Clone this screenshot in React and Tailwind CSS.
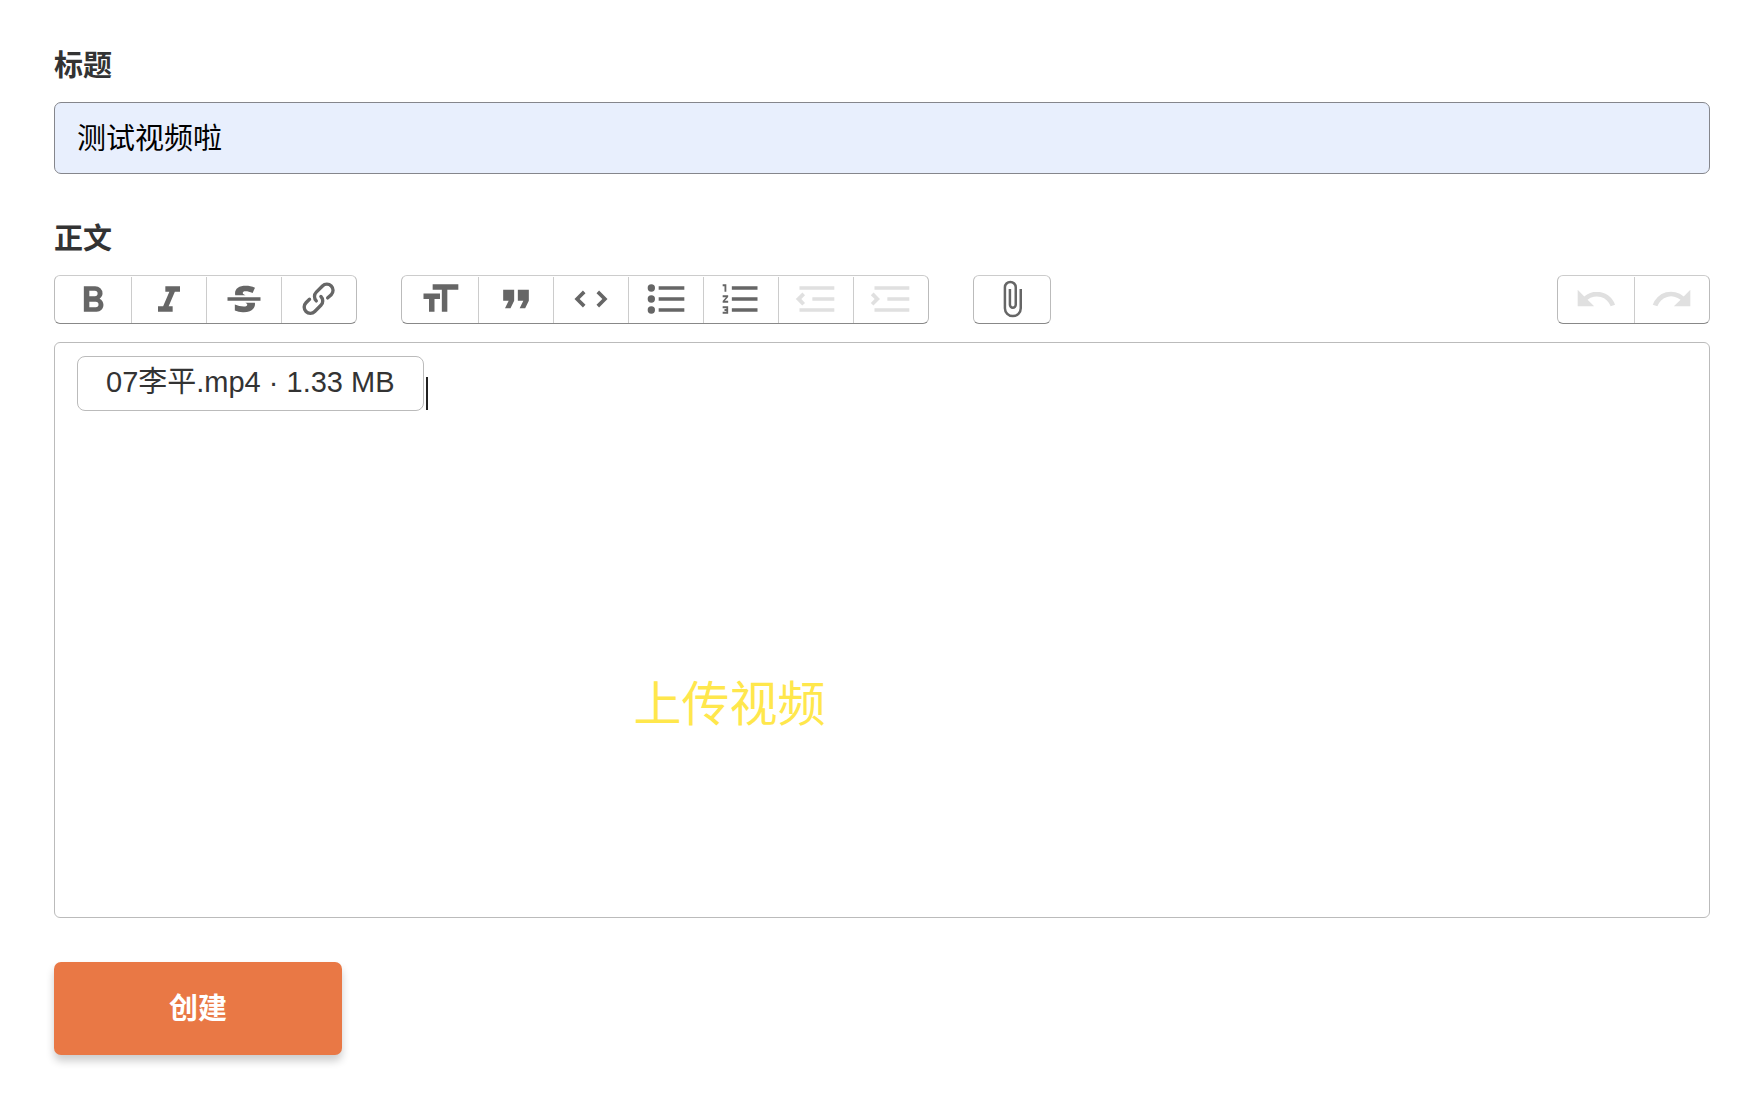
import clsx from "clsx";

const textTools = [
  {
    label: "粗体",
    d: "M15.6 11.8c1-.7 1.6-1.8 1.6-2.8a4 4 0 0 0-4-4H7v14h7c2.1 0 3.7-1.7 3.7-3.8 0-1.5-.8-2.8-2.1-3.4zM10 7.5h3a1.5 1.5 0 1 1 0 3h-3v-3zm3.5 9H10v-3h3.5a1.5 1.5 0 1 1 0 3z",
  },
  { label: "斜体", d: "M10 5v3h2.2l-3.4 8H6v3h8v-3h-2.2l3.4-8H18V5h-8z" },
  {
    label: "删除线",
    d: "M12.73 14l.28.14c.26.15.45.3.57.44.12.14.18.3.18.5 0 .3-.15.56-.44.75-.3.2-.76.3-1.39.3A13.52 13.52 0 0 1 7 14.95v3.37a10.64 10.64 0 0 0 4.84.88c1.26 0 2.35-.19 3.28-.56.93-.37 1.64-.9 2.14-1.57s.74-1.45.74-2.32c0-.26-.02-.51-.06-.75h-5.21zm-5.5-4c-.08-.34-.12-.7-.12-1.1 0-1.29.52-2.3 1.58-3.02 1.05-.72 2.5-1.08 4.34-1.08 1.62 0 3.28.34 4.97 1l-1.3 2.93c-1.47-.6-2.73-.9-3.8-.9-.55 0-.96.08-1.2.26-.26.17-.38.38-.38.64 0 .27.16.52.48.74.17.12.53.3 1.05.53H7.23zM3 13h18v-2H3v2z",
  },
  {
    label: "链接",
    d: "M9.88 13.7a4.3 4.3 0 0 1 0-6.07l3.37-3.37a4.26 4.26 0 0 1 6.07 0 4.3 4.3 0 0 1 0 6.06l-1.96 1.72a.91.91 0 1 1-1.3-1.3l1.97-1.71a2.46 2.46 0 0 0-3.48-3.48l-3.38 3.37a2.46 2.46 0 0 0 0 3.48.91.91 0 1 1-1.3 1.3zM4.25 19.46a4.3 4.3 0 0 1 0-6.07l1.93-1.9a.91.91 0 1 1 1.3 1.3l-1.93 1.9a2.46 2.46 0 0 0 3.48 3.48l3.37-3.38c.96-.96.96-2.52 0-3.48a.91.91 0 1 1 1.3-1.3 4.3 4.3 0 0 1 0 6.07l-3.38 3.38a4.26 4.26 0 0 1-6.07 0z",
  },
];

const blockTools = [
  { label: "标题", d: "M12 9v3H9v7H6v-7H3V9h9zM8 4h14v3h-6v12h-3V7H8V4z" },
  { label: "引用", d: "M6 17h3l2-4V7H5v6h3zm8 0h3l2-4V7h-6v6h3z" },
  {
    label: "代码",
    d: "M18.2 12L15 15.2l1.4 1.4L21 12l-4.6-4.6L15 8.8l3.2 3.2zM5.8 12L9 8.8 7.6 7.4 3 12l4.6 4.6L9 15.2 5.8 12z",
  },
  {
    label: "项目列表",
    d: "M4 4a2 2 0 1 0 0 4 2 2 0 0 0 0-4zm0 6a2 2 0 1 0 0 4 2 2 0 0 0 0-4zm0 6a2 2 0 1 0 0 4 2 2 0 0 0 0-4zm4 3h14v-2H8v2zm0-6h14v-2H8v2zm0-8v2h14V5H8z",
  },
  {
    label: "编号列表",
    d: "M2 17h2v.5H3v1h1v.5H2v1h3v-4H2v1zm1-9h1V4H2v1h1v3zm-1 3h1.8L2 13.1v.9h3v-1H3.2L5 10.9V10H2v1zm5-6v2h14V5H7zm0 14h14v-2H7v2zm0-6h14v-2H7v2z",
  },
  {
    label: "减少缩进",
    disabled: true,
    d: "M3 19h19v-2H3v2zm7-6h12v-2H10v2zm-8.3-.3l2.8 2.9L6 14.2 4 12l2-2-1.4-1.5L1 12l.7.7zM3 5v2h19V5H3z",
  },
  {
    label: "增加缩进",
    disabled: true,
    d: "M3 19h19v-2H3v2zm7-6h12v-2H10v2zm-6.9-1L1 14.2l1.4 1.4L6 12l-.7-.7-2.8-2.8L1 9.9 3.1 12zM3 5v2h19V5H3z",
  },
];

const fileTools = [
  {
    label: "附件",
    small: true,
    d: "M16.5 6v11.5a4 4 0 1 1-8 0V5a2.5 2.5 0 0 1 5 0v10.5a1 1 0 1 1-2 0V6H10v9.5a2.5 2.5 0 0 0 5 0V5a4 4 0 1 0-8 0v12.5a5.5 5.5 0 0 0 11 0V6h-1.5z",
  },
];

const historyTools = [
  {
    label: "撤销",
    disabled: true,
    d: "M12.5 8c-2.6 0-5 1-6.9 2.6L2 7v9h9l-3.6-3.6A8 8 0 0 1 20 16l2.4-.8a10.5 10.5 0 0 0-10-7.2z",
  },
  {
    label: "重做",
    disabled: true,
    d: "M18.4 10.6a10.5 10.5 0 0 0-16.9 4.6L4 16a8 8 0 0 1 12.7-3.6L13 16h9V7l-3.6 3.6z",
  },
];

function ToolGroup({ tools }) {
  return (
    <div className="flex rounded-md border border-[#bbb] border-t-[#ccc] border-b-[#888] pt-px">
      {tools.map((tool) => (
        <button
          key={tool.label}
          type="button"
          aria-label={tool.label}
          disabled={tool.disabled}
          className="flex h-[46px] w-[75px] items-center justify-center border-l border-[#ccc] pb-[2px] first:w-[76px] first:border-l-0"
        >
          <svg
            viewBox="0 0 24 24"
            aria-hidden="true"
            className={clsx(tool.small ? "size-10" : "size-11", tool.disabled ? "fill-[#e0e0e0]" : "fill-[#666]")}
          >
            <path d={tool.d} />
          </svg>
        </button>
      ))}
    </div>
  );
}

export default function App() {
  return (
    <form
      className="pt-12 pr-[50px] pb-14 pl-[54px] font-['Liberation_Sans','Noto_Sans_CJK_SC',sans-serif] text-[29px] leading-9 text-[#333]"
      onSubmit={(e) => e.preventDefault()}
    >
      <label htmlFor="title" className="block font-bold">
        标题
      </label>
      <input
        id="title"
        type="text"
        defaultValue="测试视频啦"
        className="mt-[18px] block h-[72px] w-full rounded-[7px] border border-[#85868c] bg-[#e8effd] px-[22px] pb-1 text-black outline-none"
      />

      <div id="body-label" className="mt-[47px] font-bold">
        正文
      </div>
      <div className="mt-[18px] flex gap-11">
        <ToolGroup tools={textTools} />
        <ToolGroup tools={blockTools} />
        <ToolGroup tools={fileTools} />
        <div className="ml-auto">
          <ToolGroup tools={historyTools} />
        </div>
      </div>

      <div className="relative mt-[18px]">
        <div
          role="textbox"
          aria-multiline="true"
          aria-labelledby="body-label"
          contentEditable
          suppressContentEditableWarning
          className="flex min-h-[576px] items-start rounded-md border border-[#bbb] px-[22px] py-[13px] outline-none"
        >
          <figure contentEditable={false} className="rounded-lg border border-[#bbb] px-7 pt-[7px] pb-[10px]">
            07李平.mp4 · 1.33 MB
          </figure>
          {/* caret */}
          <span className="mt-[21px] ml-[2px] h-[33px] w-[2px] bg-[#222]" />
        </div>
        <p className="pointer-events-none absolute top-[331px] left-[35%] text-5xl leading-[64px] text-[#ffe74c]">
          上传视频
        </p>
      </div>

      <button
        type="submit"
        className="mt-11 h-[93px] w-72 rounded-[7px] bg-[#e97845] font-bold text-white shadow-[0_6px_8px_rgba(0,0,0,0.2)]"
      >
        创建
      </button>
    </form>
  );
}
